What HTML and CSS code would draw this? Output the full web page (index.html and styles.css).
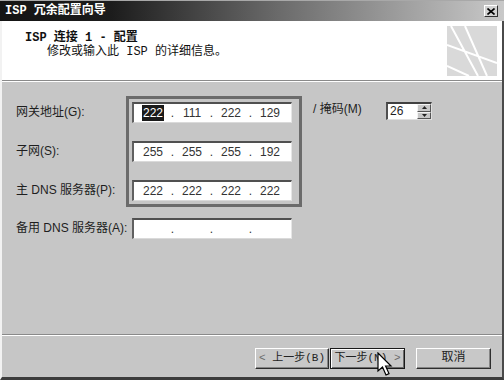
FILE: index.html
```html
<!DOCTYPE html>
<html lang="zh-CN">
    <head>
        <meta charset="UTF-8" />
        <title>ISP 冗余配置向导</title>
        <link rel="stylesheet" href="styles.css">
    </head>
    <body>
        <div class="window">
            <div class="titlebar">
                <span class="title">ISP 冗余配置向导</span>
                <span class="close">
                    <svg width="8" height="7" viewBox="0 0 8 7"><path d="M0.5 0.5 L7.5 6.5 M7.5 0.5 L0.5 6.5" stroke="#000" stroke-width="1.6" fill="none"/></svg>
                </span>
            </div>

            <div class="frame">
                <div class="header">
                    <div class="header-text">
                        <div class="step">ISP 连接 1 - 配置</div>
                        <div class="desc">修改或输入此 ISP 的详细信息。</div>
                    </div>
                    <svg class="logo" width="50" height="50" viewBox="0 0 50 50">
                        <rect width="50" height="50" fill="#d9d9d9"/>
                        <path d="M4 0 L31 50 M18 0 L40 50 M0 19 L50 37 M0 40 L22 50" stroke="#fff" stroke-width="2" fill="none"/>
                    </svg>
                </div>

                <div class="content">
                    <div class="group">
                        <div class="labels">
                            <div class="label">网关地址(G):</div>
                            <div class="label">子网(S):</div>
                            <div class="label">主 DNS 服务器(P):</div>
                        </div>
                        <div class="box">
                            <div class="ip">
                                <span class="octet"><span class="selected">222</span></span><span class="dot">.</span>
                                <span class="octet">111</span><span class="dot">.</span>
                                <span class="octet">222</span><span class="dot">.</span>
                                <span class="octet">129</span>
                            </div>
                            <div class="ip">
                                <span class="octet">255</span><span class="dot">.</span>
                                <span class="octet">255</span><span class="dot">.</span>
                                <span class="octet">255</span><span class="dot">.</span>
                                <span class="octet">192</span>
                            </div>
                            <div class="ip">
                                <span class="octet">222</span><span class="dot">.</span>
                                <span class="octet">222</span><span class="dot">.</span>
                                <span class="octet">222</span><span class="dot">.</span>
                                <span class="octet">222</span>
                            </div>
                        </div>
                        <div class="mask">
                            <span class="mask-label">/ 掩码(M)</span>
                            <div class="spin">
                                <span class="spin-value">26</span>
                                <span class="spin-buttons">
                                    <span class="spin-btn">
                                        <svg width="5" height="3" viewBox="0 0 5 3"><path d="M2.5 0 L5 3 L0 3 Z" fill="#222"/></svg>
                                    </span>
                                    <span class="spin-btn">
                                        <svg width="5" height="3" viewBox="0 0 5 3"><path d="M0 0 L5 0 L2.5 3 Z" fill="#222"/></svg>
                                    </span>
                                </span>
                            </div>
                        </div>
                    </div>

                    <div class="row">
                        <div class="label wide">备用 DNS 服务器(A):</div>
                        <div class="ip">
                            <span class="octet"></span><span class="dot">.</span>
                            <span class="octet"></span><span class="dot">.</span>
                            <span class="octet"></span><span class="dot">.</span>
                            <span class="octet"></span>
                        </div>
                    </div>
                </div>

                <div class="footer">
                    <button class="btn back"><span class="arrow">&lt;</span> 上一步(B)</button>
                    <button class="btn default">下一步(N) <span class="arrow">&gt;</span></button>
                    <button class="btn cancel">取消</button>
                </div>
            </div>

            <!-- mouse pointer over the Next button -->
            <svg class="pointer" width="17" height="26" viewBox="0 0 17 26">
                <path d="M1 1 L1 19 L5.5 15 L9 23 L12 21.6 L8.6 14 L14 14 Z" fill="#fff" stroke="#000" stroke-width="1.2" stroke-linejoin="miter"/>
            </svg>
        </div>
    </body>
</html>
```

FILE: styles.css
```css
html,
body {
    margin: 0;
    padding: 0;
    background: #c6c6c6;
}

.window {
    position: relative;
    width: 504px;
    height: 380px;
    display: flex;
    flex-direction: column;
    overflow: hidden;
    font-family: "Liberation Sans", "Noto Sans CJK SC", sans-serif;
    font-size: 12px;
    color: #1e1e1e;
}

/* title bar */
.titlebar {
    height: 21px;
    box-sizing: border-box;
    border-top: 1px solid #a8a8a8;
    background: linear-gradient(to right, #141414 0%, #1c1c1c 22%, #6a6a6a 55%, #c9c9c9 100%);
    display: flex;
    align-items: center;
    justify-content: space-between;
    padding: 0 6px 0 5px;
}

.title {
    font-family: "Liberation Mono", "Noto Sans CJK SC", monospace;
    font-weight: bold;
    color: #ffffff;
    line-height: 14px;
}

.close {
    width: 14px;
    height: 12px;
    box-sizing: border-box;
    background: #d2d2d2;
    border: 1px solid;
    border-color: #ffffff #303030 #303030 #ffffff;
    display: flex;
    align-items: center;
    justify-content: center;
}

/* frame */
.frame {
    flex: 1;
    display: flex;
    flex-direction: column;
    border-left: 2px solid #f2f2f2;
    border-right: 2px solid #4a4a4a;
    border-bottom: 3px solid #3c3c3c;
}

.header {
    height: 59px;
    background: #ffffff;
    border-bottom: 1px solid #8a8a8a;
    display: flex;
    justify-content: space-between;
    align-items: flex-start;
}

.header-text {
    padding: 10px 0 0 23px;
    font-family: "Liberation Mono", "Noto Sans CJK SC", monospace;
    line-height: 14px;
    color: #111;
}

.step {
    font-weight: bold;
}

.desc {
    margin-left: 22px;
}

.logo {
    display: block;
    margin: 5px 5px 0 0;
}

/* form area */
.content {
    flex: 1;
    border-top: 1px solid #ffffff;
    padding: 14px 0 0 14px;
}

.group {
    display: flex;
    align-items: flex-start;
}

.labels {
    width: 110px;
    padding-top: 6px;
    display: flex;
    flex-direction: column;
    gap: 18px;
}

.label {
    height: 21px;
    line-height: 21px;
    white-space: nowrap;
}

.label.wide {
    width: 116px;
}

.box {
    border: 3px solid #6b6b6b;
    padding: 3px 7px 3px 3px;
    display: flex;
    flex-direction: column;
    gap: 18px;
}

.ip {
    width: 160px;
    height: 21px;
    box-sizing: border-box;
    background: #ffffff;
    border-top: 2px solid #505050;
    border-left: 2px solid #606060;
    border-right: 1px solid #e6e6e6;
    border-bottom: 1px solid #dadada;
    padding-left: 6px;
    display: flex;
    align-items: center;
    color: #333;
}

.octet {
    width: 26px;
    text-align: center;
    line-height: 14px;
}

.dot {
    width: 13px;
    text-align: center;
    line-height: 14px;
}

.selected {
    background: #1a1a1a;
    color: #ffffff;
    padding: 1px 1px;
}

.mask {
    margin-left: 11px;
    padding-top: 6px;
    display: flex;
    align-items: flex-start;
}

.mask-label {
    width: 73px;
    line-height: 14px;
    white-space: nowrap;
}

.spin {
    width: 46px;
    height: 18px;
    box-sizing: border-box;
    background: #ffffff;
    border-top: 2px solid #404040;
    border-left: 2px solid #505050;
    border-right: 1px solid #e0e0e0;
    border-bottom: 1px solid #e0e0e0;
    display: flex;
    justify-content: space-between;
}

.spin-value {
    padding-left: 2px;
    line-height: 15px;
}

.spin-buttons {
    width: 14px;
    display: flex;
    flex-direction: column;
}

.spin-btn {
    flex: 1;
    background: #c8c8c8;
    border: 1px solid;
    border-color: #f4f4f4 #555 #555 #f4f4f4;
    display: flex;
    align-items: center;
    justify-content: center;
}

.row {
    display: flex;
    align-items: center;
    margin-top: 11px;
}

/* buttons */
.footer {
    height: 43px;
    box-sizing: border-box;
    border-top: 1px solid #8a8a8a;
    box-shadow: inset 0 1px 0 #ffffff;
    padding: 13px 11px 0 0;
    display: flex;
    justify-content: flex-end;
    align-items: flex-start;
}

.btn {
    height: 21px;
    margin: 0;
    padding: 0;
    background: #c8c8c8;
    border: 1px solid;
    border-color: #ffffff #2e2e2e #2e2e2e #ffffff;
    box-shadow: inset -1px -1px 0 #858585;
    font-family: "Liberation Mono", "Noto Sans CJK SC", monospace;
    font-size: 11px;
    color: #222;
    line-height: 17px;
    white-space: nowrap;
}

.btn .arrow {
    color: #6a6a6a;
}

.back {
    width: 74px;
}

.default {
    width: 75px;
    margin-left: 1px;
    border-color: #1a1a1a;
    box-shadow: inset 1px 1px 0 #ffffff, inset -1px -1px 0 #6a6a6a;
}

.cancel {
    width: 75px;
    margin-left: 11px;
    font-size: 12px;
}

.pointer {
    position: absolute;
    left: 377px;
    top: 352px;
}
```
